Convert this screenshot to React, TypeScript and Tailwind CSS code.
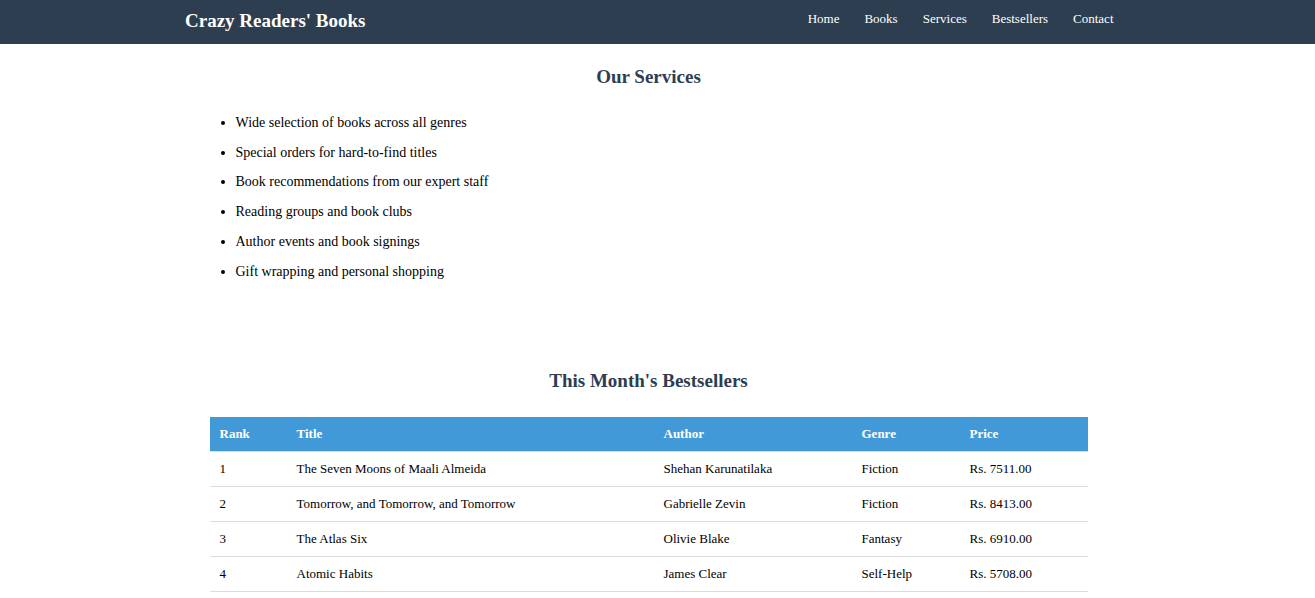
import * as React from 'react';

const NAV = ['Home', 'Books', 'Services', 'Bestsellers', 'Contact'];

const SERVICES = [
  'Wide selection of books across all genres',
  'Special orders for hard-to-find titles',
  'Book recommendations from our expert staff',
  'Reading groups and book clubs',
  'Author events and book signings',
  'Gift wrapping and personal shopping',
];

const BESTSELLERS = [
  { rank: 1, title: 'The Seven Moons of Maali Almeida', author: 'Shehan Karunatilaka', genre: 'Fiction', price: 'Rs. 7511.00' },
  { rank: 2, title: 'Tomorrow, and Tomorrow, and Tomorrow', author: 'Gabrielle Zevin', genre: 'Fiction', price: 'Rs. 8413.00' },
  { rank: 3, title: 'The Atlas Six', author: 'Olivie Blake', genre: 'Fantasy', price: 'Rs. 6910.00' },
  { rank: 4, title: 'Atomic Habits', author: 'James Clear', genre: 'Self-Help', price: 'Rs. 5708.00' },
];

export default function App() {
  return (
    <div className="min-h-screen bg-white text-black font-['Liberation_Serif','Times_New_Roman',serif]">
      {/* Header */}
      <header className="bg-[#2c3e50] text-white h-[44px]">
        <div className="mx-auto w-[960px] h-full flex items-center justify-between pl-[7.5px] pr-[24px]">
          <h1 className="text-[19px] font-bold leading-none -mt-[4px]">Crazy Readers' Books</h1>
          <nav className="flex items-center gap-[25px] text-[13px] -mt-[6px]">
            {NAV.map(item => (
              <a key={item} href="#" className="text-white">{item}</a>
            ))}
          </nav>
        </div>
      </header>

      <main className="mx-auto w-[960px] pl-[32px] pr-[50px]">
        {/* Services */}
        <section className="pt-[22px]">
          <h2 className="text-center text-[19px] font-bold text-[#2c3e50] leading-[22px]">Our Services</h2>
          <ul className="list-disc pl-[26px] mt-[20px] text-[14px]">
            {SERVICES.map(s => (
              <li key={s} className="leading-[16px] py-[6.9px]">{s}</li>
            ))}
          </ul>
        </section>

        {/* Bestsellers */}
        <section className="pt-[83px]">
          <h2 className="text-center text-[19px] font-bold text-[#2c3e50] leading-[22px]">This Month's Bestsellers</h2>
          <table className="w-full mt-[25px] border-collapse text-[13px] text-left table-fixed">
            <colgroup>
              <col className="w-[77px]" />
              <col className="w-[367px]" />
              <col className="w-[198px]" />
              <col className="w-[108px]" />
              <col />
            </colgroup>
            <thead>
              <tr className="bg-[#4299d8] text-white">
                {['Rank', 'Title', 'Author', 'Genre', 'Price'].map(h => (
                  <th key={h} className="px-[10px] h-[35px] font-bold border-b border-[#dddddd]">{h}</th>
                ))}
              </tr>
            </thead>
            <tbody>
              {BESTSELLERS.map(b => (
                <tr key={b.rank} className="border-b border-[#dddddd]">
                  <td className="px-[10px] h-[35px]">{b.rank}</td>
                  <td className="px-[10px]">{b.title}</td>
                  <td className="px-[10px]">{b.author}</td>
                  <td className="px-[10px]">{b.genre}</td>
                  <td className="px-[10px]">{b.price}</td>
                </tr>
              ))}
            </tbody>
          </table>
        </section>
      </main>
    </div>
  );
}
